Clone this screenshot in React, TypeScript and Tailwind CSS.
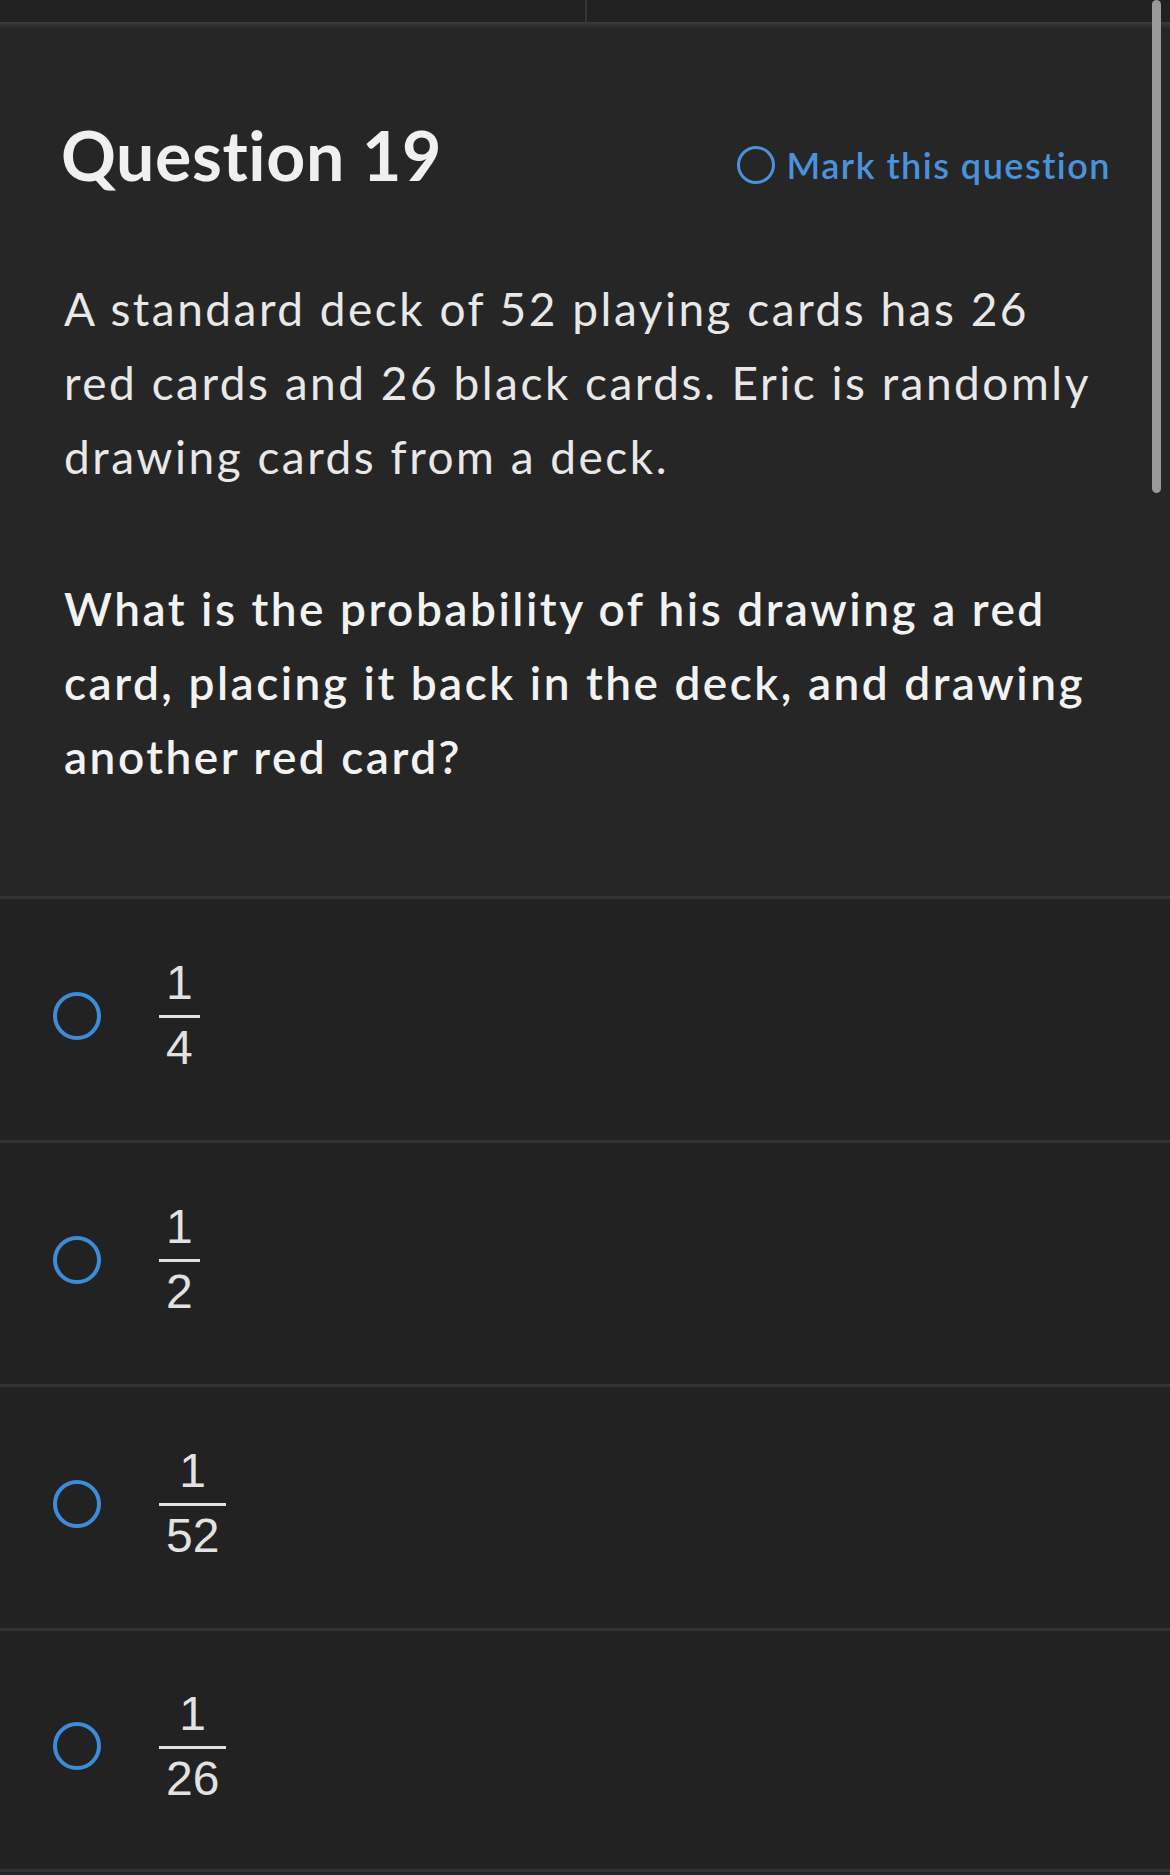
import React from "react";

const choices = [
  { num: "1", den: "4" },
  { num: "1", den: "2" },
  { num: "1", den: "52" },
  { num: "1", den: "26" },
];

function Fraction({ num, den }: { num: string; den: string }) {
  return (
    <div className="inline-flex flex-col items-stretch text-[48px] leading-none text-[#e2e2e2] font-['Liberation_Sans',Arial,sans-serif]">
      <span className="px-[7px] pb-2 text-center border-b-[3px] border-[#e2e2e2]">{num}</span>
      <span className="px-[7px] pt-[6px] text-center">{den}</span>
    </div>
  );
}

export default function App() {
  return (
    <div className="relative w-[1170px] h-[1875px] overflow-hidden bg-[#262626] font-['Lato','Noto_Sans',sans-serif]">
      {/* top tabs */}
      <div className="flex h-[22px] bg-[#212121]">
        <div className="w-[587px] border-r-2 border-[#343434]" />
        <div className="flex-1" />
      </div>
      <div className="h-[6px] bg-gradient-to-b from-[#3b3b3b] to-[#2a2a2a]" />

      {/* question */}
      <div className="px-16 pt-[93px] pb-[102px]">
        <div className="flex items-start justify-between">
          <h1 className="-ml-[3px] text-[68px] leading-none font-bold tracking-[0.6px] text-[#f0f0f0]">Question 19</h1>
          <button className="mt-[25px] -mr-[5px] flex items-center gap-[12px] text-[36px] leading-none font-semibold tracking-[1.5px] text-[#4a92dc]">
            <span className="w-[38px] h-[38px] rounded-full border-[3px] border-[#4a92dc]" />
            Mark this question
          </button>
        </div>

        <p className="mt-[83px] text-[46px] leading-[74px] tracking-[2.5px] text-[#e8e8e8]">
          <span className="block whitespace-nowrap">A standard deck of 52 playing cards has 26</span>
          <span className="block whitespace-nowrap">red cards and 26 black cards. Eric is randomly</span>
          <span className="block whitespace-nowrap">drawing cards from a deck.</span>
        </p>

        <p className="mt-[78px] text-[46px] leading-[74px] font-semibold tracking-[2.5px] text-[#f2f2f2]">
          <span className="block whitespace-nowrap">What is the probability of his drawing a red</span>
          <span className="block whitespace-nowrap">card, placing it back in the deck, and drawing</span>
          <span className="block whitespace-nowrap">another red card?</span>
        </p>
      </div>

      {/* answer choices */}
      <div className="bg-[#222222]">
        {choices.map((c, i) => (
          <div
            key={i}
            className="flex items-center h-[244px] pl-[53px] pb-2 gap-[58px] border-t-[3px] border-[#333333] last:border-b-[3px]"
          >
            <span className="w-12 h-12 rounded-full border-4 border-[#3d8cdb] shrink-0" />
            <Fraction num={c.num} den={c.den} />
          </div>
        ))}
      </div>

      {/* scrollbar */}
      <div className="absolute top-0 right-[9px] w-[9px] h-[493px] rounded-full bg-[#999999]" />
    </div>
  );
}
